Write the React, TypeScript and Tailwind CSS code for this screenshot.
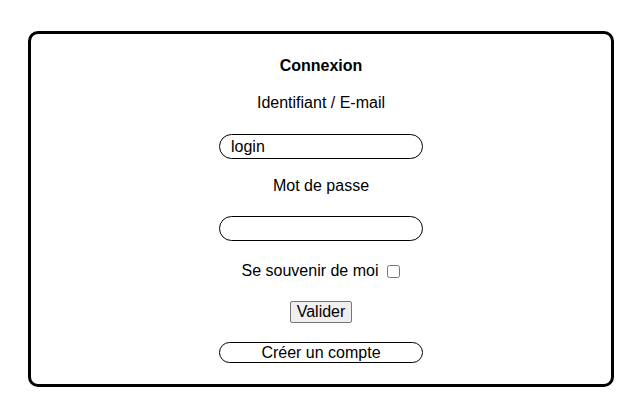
export default function App() {
  return (
    <div className="min-h-[407px] w-[630px] bg-white pt-[31px] pl-[28px] font-['Liberation_Sans',Arial,sans-serif] text-[16px] text-black">
      <form
        className="flex h-[356px] w-[586px] flex-col items-center rounded-[10px] border-[3px] border-black"
        onSubmit={(e) => e.preventDefault()}
      >
        <h1 className="mt-[23px] h-[18px] text-[16px] leading-[18px] font-bold">Connexion</h1>

        <label htmlFor="login" className="mt-[19px] h-[18px] leading-[18px]">
          Identifiant / E-mail
        </label>
        <input
          id="login"
          type="text"
          defaultValue="login"
          className="mt-[22px] h-[25px] w-[204px] rounded-full border border-black px-[11px] text-[16px] leading-[18px] outline-none"
        />

        <label htmlFor="password" className="mt-[18px] h-[18px] leading-[18px]">
          Mot de passe
        </label>
        <input
          id="password"
          type="password"
          className="mt-[21px] h-[25px] w-[204px] rounded-full border border-black px-[11px] text-[16px] leading-[18px] outline-none"
        />

        <div className="mt-[21px] flex h-[18px] items-center leading-[18px]">
          <label htmlFor="remember">Se souvenir de moi</label>
          <input id="remember" type="checkbox" className="ml-[9px] h-[13px] w-[13px]" />
        </div>

        <button
          type="submit"
          className="mt-[21px] h-[22px] rounded-[2px] border border-[#767676] bg-[#efefef] px-[6px] text-[16px] leading-[18px]"
        >
          Valider
        </button>

        <button
          type="button"
          className="mt-[19px] h-[21px] w-[204px] rounded-full border border-black bg-white text-[16px] leading-[18px]"
        >
          Créer un compte
        </button>
      </form>
    </div>
  );
}
